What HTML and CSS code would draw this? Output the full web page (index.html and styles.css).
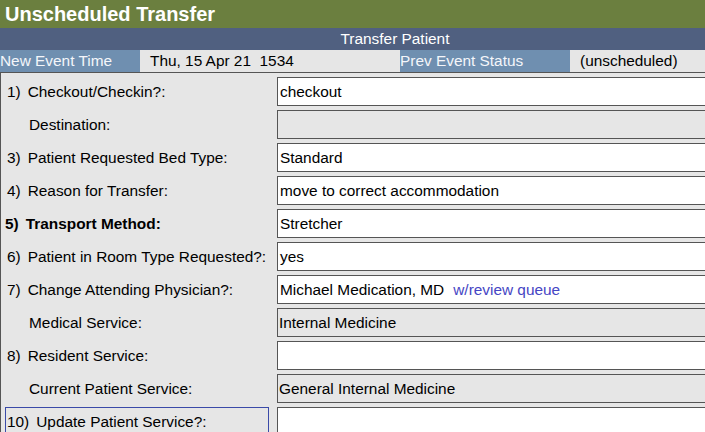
FILE: index.html
```html
<!DOCTYPE html>
<html>
<head>
<meta charset="utf-8">
<link rel="stylesheet" href="styles.css">
</head>
<body>
<div class="page">
  <div class="title">Unscheduled Transfer</div>
  <div class="subhead">Transfer Patient</div>
  <div class="info">
    <div class="info-label c1">New Event Time</div>
    <div class="info-value c2">Thu, 15 Apr 21&nbsp; 1534</div>
    <div class="info-label c3">Prev Event Status</div>
    <div class="info-value c4">(unscheduled)</div>
  </div>
  <div class="panel">
    <div class="label"><span class="num">1)</span><span class="txt">Checkout/Checkin?:</span></div>
    <div class="field">checkout</div>

    <div class="label sub">Destination:</div>
    <div class="field ro"></div>

    <div class="label"><span class="num">3)</span><span class="txt">Patient Requested Bed Type:</span></div>
    <div class="field">Standard</div>

    <div class="label"><span class="num">4)</span><span class="txt">Reason for Transfer:</span></div>
    <div class="field">move to correct accommodation</div>

    <div class="label bold"><span class="num">5)</span><span class="txt">Transport Method:</span></div>
    <div class="field">Stretcher</div>

    <div class="label"><span class="num">6)</span><span class="txt">Patient in Room Type Requested?:</span></div>
    <div class="field">yes</div>

    <div class="label"><span class="num">7)</span><span class="txt">Change Attending Physician?:</span></div>
    <div class="field">Michael Medication, MD<span class="link">w/review queue</span></div>

    <div class="label sub">Medical Service:</div>
    <div class="field ro">Internal Medicine</div>

    <div class="label"><span class="num">8)</span><span class="txt">Resident Service:</span></div>
    <div class="field"></div>

    <div class="label sub">Current Patient Service:</div>
    <div class="field ro">General Internal Medicine</div>

    <div class="label focus"><span class="num">10)</span><span class="txt">Update Patient Service?:</span></div>
    <div class="field"></div>
  </div>
</div>
</body>
</html>
```
FILE: styles.css
```css
html, body {
  margin: 0;
  padding: 0;
  overflow: hidden;
  background: #e6e6e6;
}
.page {
  width: 705px;
  overflow: hidden;
  font-family: "Liberation Sans", Arial, sans-serif;
  font-size: 15.4px;
  color: #000;
}
.title {
  height: 28px;
  line-height: 28px;
  background: #6b7f3f;
  color: #fff;
  font-weight: bold;
  font-size: 20px;
  padding-left: 5px;
}
.subhead {
  height: 22px;
  line-height: 22px;
  background: #506080;
  color: #fff;
  text-align: center;
  padding-left: 85px;
}
.info {
  display: grid;
  grid-template-columns: 140px 260px 170px 1fr;
  height: 22px;
  line-height: 22px;
}
.info-label {
  background: #6f8fb0;
  color: #f4f6fa;
}
.info-value {
  background: #e6e6e6;
  padding-left: 10px;
}
.panel {
  border-top: 1px solid #555;
  border-left: 1px solid #555;
  background: #e6e6e6;
  padding-top: 4px;
  display: grid;
  grid-template-columns: 276px 1fr;
  grid-auto-rows: 29px;
  row-gap: 4px;
}
.label {
  display: flex;
  align-items: center;
  padding-left: 6px;
  white-space: nowrap;
}
.label .txt {
  margin-left: 7px;
}
.label.sub {
  padding-left: 28px;
}
.label.bold {
  font-weight: bold;
  padding-left: 4px;
}
.label.focus {
  margin-left: 4px;
  width: 264px;
  box-sizing: border-box;
  border: 1px solid #3a4aa8;
  padding-left: 1px;
}
.field {
  box-sizing: border-box;
  border: 1px solid #555;
  border-right: none;
  background: #fff;
  display: flex;
  align-items: center;
  padding-left: 2px;
  white-space: nowrap;
}
.field.ro {
  background: #e6e6e6;
  padding-left: 1px;
}
.link {
  color: #4646c4;
  margin-left: 9px;
}
```
